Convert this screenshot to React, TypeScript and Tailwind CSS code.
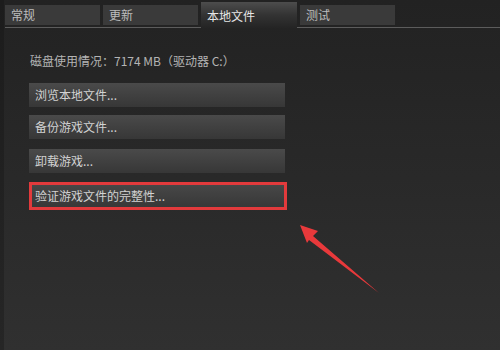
const TABS = ["常规", "更新", "本地文件", "测试"];

const BUTTONS = [
  { label: "浏览本地文件...", mt: "mt-[15px]" },
  { label: "备份游戏文件...", mt: "mt-[8px]" },
  { label: "卸载游戏...", mt: "mt-[10px]" },
];

const font = "font-['Microsoft_YaHei','Noto_Sans_CJK_SC',sans-serif]";

function Tab({ label, active }: { label: string; active: boolean }) {
  if (active) {
    return (
      <div className="relative -mb-px flex h-[26px] w-[96px] items-start bg-gradient-to-b from-[#4d4d4d] via-[#333333] to-[#242424] pl-[6px] pt-[7px] text-[12px] leading-[14px] text-[#e6e6e6]">
        {label}
      </div>
    );
  }
  return (
    <div className="mb-[2px] flex h-[20px] w-[95px] items-center bg-[#3a3a3a] pl-[6px] text-[12px] leading-[14px] text-[#bdbdbd]">
      {label}
    </div>
  );
}

function ActionButton({ label }: { label: string }) {
  return (
    <div className="flex h-[24px] w-[256px] items-center bg-gradient-to-b from-[#4a4a4a] to-[#373737] pl-[6px] text-[12px] leading-[14px] text-[#d2d2d2]">
      {label}
    </div>
  );
}

export default function App() {
  return (
    <div className={`relative flex h-[350px] w-[500px] overflow-hidden bg-gradient-to-b from-[#222222] to-[#303030] ${font}`}>
      <div className="w-[4px] shrink-0 bg-gradient-to-b from-[#1c1c1c] to-[#262626]" />
      <div className="flex flex-1 flex-col pl-[1px]">
        <div className="flex h-[28px] items-end gap-[3px] border-b border-[#5c5c5c]">
          {TABS.map((t, i) => (
            <Tab key={t} label={t} active={i === 2} />
          ))}
        </div>
        <div className="flex flex-col pl-[24px] pt-[26px]">
          <div className="pl-[1px] text-[12px] leading-[14px] text-[#b4b4b4]">
            磁盘使用情况：7174 MB（驱动器 C:）
          </div>
          {BUTTONS.map((b) => (
            <div key={b.label} className={b.mt}>
              <ActionButton label={b.label} />
            </div>
          ))}
          <div className="mt-[9px] flex h-[28px] w-[258px] border-[3px] border-[#e23a3c]">
            <div className="flex h-full flex-1 items-center bg-gradient-to-b from-[#474747] to-[#383838] pl-[3px] text-[12px] leading-[14px] text-[#d2d2d2]">
              验证游戏文件的完整性...
            </div>
          </div>
        </div>
      </div>
      <svg className="absolute left-0 top-0" width="500" height="350" viewBox="0 0 500 350" aria-hidden>
        <path d="M300 225 L318 231 L313 236 L379 293 L309 240 L307 243 Z" fill="#e8393b" />
      </svg>
    </div>
  );
}
